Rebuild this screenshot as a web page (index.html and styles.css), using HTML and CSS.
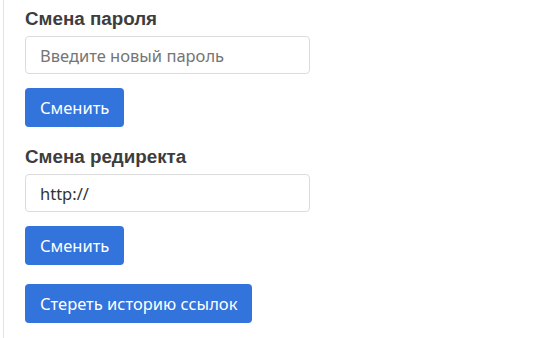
FILE: index.html
```html
<!DOCTYPE html>
<html lang="ru">
<head>
    <meta charset="UTF-8">
    <meta name="viewport" content="width=device-width, initial-scale=1.0">
    <title>Настройки</title>
    <link rel="stylesheet" href="styles.css">
</head>
<body>
    <div class="panel">
        <div class="field">
            <h3 class="field-title">Смена пароля</h3>
            <input class="input" type="password" placeholder="Введите новый пароль">
            <button class="btn">Сменить</button>
        </div>

        <div class="field">
            <h3 class="field-title">Смена редиректа</h3>
            <input class="input" type="text" value="http://">
            <button class="btn">Сменить</button>
        </div>

        <button class="btn btn-wide">Стереть историю ссылок</button>
    </div>
</body>
</html>
```

FILE: styles.css
```css
body {
    margin: 0;
    background: #fff;
    font-family: 'Noto Sans', sans-serif;
}

.panel {
    margin-left: 3px;
    padding: 8px 0 15px 21px;
    min-height: 315px;
    border-left: 1px solid #e3e3e3;
}

.field {
    display: flex;
    flex-direction: column;
    align-items: flex-start;
    margin-bottom: 19px;
}

.field-title {
    margin: 0 0 7px;
    font-family: 'Liberation Sans', Arial, sans-serif;
    font-size: 18.8px;
    line-height: 21px;
    font-weight: bold;
    color: #3d3d3d;
}

.input {
    box-sizing: border-box;
    width: 285px;
    height: 38px;
    margin-bottom: 14px;
    padding: 6px 14px;
    border: 1px solid #dcdcdc;
    border-radius: 4px;
    font-family: inherit;
    font-size: 16.5px;
    color: #333;
    background: #fff;
}

.input::placeholder {
    color: #757575;
}

.btn {
    height: 39px;
    padding: 0 15px;
    border: none;
    border-radius: 4px;
    background: #3273dc;
    color: #fff;
    font-family: inherit;
    font-size: 16.5px;
    cursor: pointer;
}
```
